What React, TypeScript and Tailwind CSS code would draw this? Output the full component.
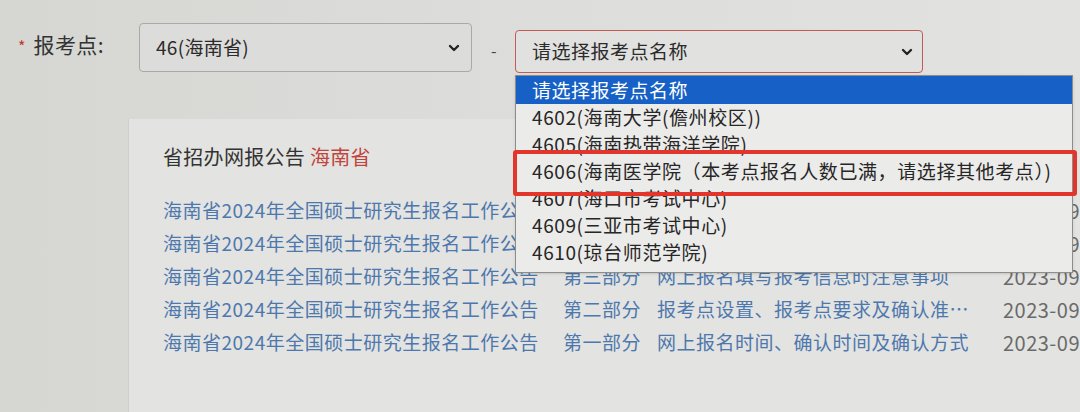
import { ChevronDown } from 'lucide-react'

const font = { fontFamily: '"Noto Sans CJK SC", "Noto Sans", sans-serif' }

const options = [
  '4602(海南大学(儋州校区))',
  '4605(海南热带海洋学院)',
  '4606(海南医学院（本考点报名人数已满，请选择其他考点）)',
  '4607(海口市考试中心)',
  '4609(三亚市考试中心)',
  '4610(琼台师范学院)',
]

const notices = [
  { part: '第三部分', title: '网上报名填写报考信息时注意事项' },
  { part: '第三部分', title: '网上报名填写报考信息时注意事项' },
  { part: '第三部分', title: '网上报名填写报考信息时注意事项' },
  { part: '第二部分', title: '报考点设置、报考点要求及确认准…' },
  { part: '第一部分', title: '网上报名时间、确认时间及确认方式' },
]

export default function App() {
  return (
    <div
      className="relative h-[412px] w-[1080px] overflow-hidden bg-gradient-to-r from-[#d6d6d3] via-[#dddddb] to-[#e2e2e0] text-[#2a2a2a]"
      style={font}
    >
      {/* form row */}
      <div className="flex items-start">
        <div className="mt-[29px] flex w-[139px] items-center pl-[18px]">
          <span className="mt-[2px] text-[16px] text-[#c0392b]">*</span>
          <span className="ml-[8px] text-[21px] tracking-[0.4px] text-[#333]">报考点:</span>
        </div>
        <div className="mt-[23px] flex h-[49px] w-[333px] items-center justify-between rounded-[4px] border border-[#a9a9a7] bg-[#dcdcda] pl-[16px] pr-[9px]">
          <span className="text-[19px] tracking-[0.3px] text-[#2b2b2b]">46(海南省)</span>
          <ChevronDown size={16} strokeWidth={3.5} className="text-[#222]" />
        </div>
        <span className="ml-[19px] mt-[38px] w-[24px] text-[16px] text-[#444]">-</span>
        <div className="mt-[30px]">
          <div className="flex h-[43px] w-[408px] items-center justify-between rounded-[4px] border border-[#c25a55] bg-[#e1e1df] pl-[16px] pr-[7px]">
            <span className="text-[19px] tracking-[0.5px] text-[#2b2b2b]">请选择报考点名称</span>
            <ChevronDown size={16} strokeWidth={3.5} className="text-[#222]" />
          </div>
        </div>
      </div>

      {/* notice panel */}
      <div className="ml-[128px] mt-[46px] h-[300px] border-l border-[#cfcfcc] bg-[#e3e3e1] pl-[34px] pt-[23px]">
        <div className="text-[20px] tracking-[0.3px] text-[#333]">
          省招办网报公告 <span className="text-[#c0443c]">海南省</span>
        </div>
        <div className="mt-[22px] flex flex-col">
          {notices.map((n, i) => (
            <div key={i} className="flex h-[33px] items-center whitespace-nowrap text-[19px] tracking-[0.5px]">
              <span className="w-[400px] text-[#4d78ad]">海南省2024年全国硕士研究生报名工作公告</span>
              <span className="w-[94px] text-[#4d78ad]">{n.part}</span>
              <span className="w-[346px] overflow-hidden text-[#4d78ad]">{n.title}</span>
              <span className="text-[20px] tracking-[0.5px] text-[#6a6a6a]">2023-09</span>
            </div>
          ))}
        </div>
      </div>

      {/* open dropdown list */}
      <div className="absolute left-[515px] top-[75px] w-[558px] overflow-hidden border border-[#8d8d8b] bg-[#ebebe9] pb-[6px] shadow-sm">
        <div className="flex h-[28px] items-center bg-[#1761c6] pl-[16px] text-[19px] tracking-[0.5px] text-white">
          请选择报考点名称
        </div>
        {options.map((o) => (
          <div key={o} className="flex h-[27px] items-center whitespace-nowrap pl-[16px] text-[19px] tracking-[0.6px] text-[#262626]">
            {o}
          </div>
        ))}
      </div>

      {/* highlight box */}
      <div className="absolute left-[513px] top-[150px] h-[46px] w-[564px] rounded-[3px] border-[4px] border-[#e2352b]" />
    </div>
  )
}
